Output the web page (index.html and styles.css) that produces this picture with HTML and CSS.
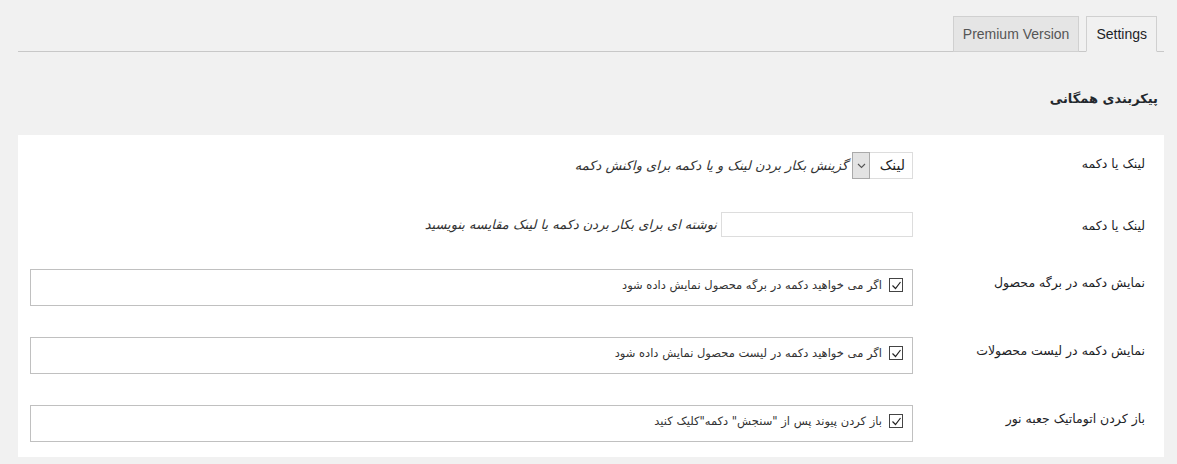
FILE: index.html
```html
<!DOCTYPE html>
<html lang="fa" dir="rtl">
<head>
<meta charset="utf-8">
<title>تنظیمات</title>
<link rel="stylesheet" href="styles.css">
</head>
<body>
<div class="wrap">
  <nav class="tabs">
    <a class="tab tab-active">Settings</a>
    <a class="tab">Premium Version</a>
  </nav>

  <h2 class="section-title">پیکربندی همگانی</h2>

  <div class="panel">
    <div class="row row-first">
      <div class="label">لینک یا دکمه</div>
      <div class="field inline">
        <div class="select">
          <span class="select-value">لینک</span>
          <span class="select-arrow">
            <svg width="9" height="6" viewBox="0 0 9 6"><path d="M1 1l3.5 3.5L8 1" fill="none" stroke="#555" stroke-width="1.1"/></svg>
          </span>
        </div>
        <span class="desc">گزینش بکار بردن لینک و یا دکمه برای واکنش دکمه</span>
      </div>
    </div>

    <div class="row row-second">
      <div class="label">لینک یا دکمه</div>
      <div class="field inline">
        <div class="text-input"></div>
        <span class="desc">نوشته ای برای بکار بردن دکمه یا لینک مقایسه بنویسید</span>
      </div>
    </div>

    <div class="row row-third">
      <div class="label">نمایش دکمه در برگه محصول</div>
      <div class="field">
        <div class="check-box">
          <span class="checkbox"><svg width="11" height="11" viewBox="0 0 11 11"><path d="M1.5 5.5l3 3 5-6.5" fill="none" stroke="#222" stroke-width="1.2"/></svg></span>
          <span class="check-text">اگر می خواهید دکمه در برگه محصول نمایش داده شود</span>
        </div>
      </div>
    </div>

    <div class="row">
      <div class="label">نمایش دکمه در لیست محصولات</div>
      <div class="field">
        <div class="check-box">
          <span class="checkbox"><svg width="11" height="11" viewBox="0 0 11 11"><path d="M1.5 5.5l3 3 5-6.5" fill="none" stroke="#222" stroke-width="1.2"/></svg></span>
          <span class="check-text">اگر می خواهید دکمه در لیست محصول نمایش داده شود</span>
        </div>
      </div>
    </div>

    <div class="row">
      <div class="label">باز کردن اتوماتیک جعبه نور</div>
      <div class="field">
        <div class="check-box">
          <span class="checkbox"><svg width="11" height="11" viewBox="0 0 11 11"><path d="M1.5 5.5l3 3 5-6.5" fill="none" stroke="#222" stroke-width="1.2"/></svg></span>
          <span class="check-text">باز کردن پیوند پس از "سنجش" دکمه"کلیک کنید</span>
        </div>
      </div>
    </div>
  </div>
</div>
</body>
</html>
```

FILE: styles.css
```css
html, body {
  margin: 0;
  padding: 0;
}

body {
  background: #f1f1f1;
  color: #1d2327;
  font-family: "DejaVu Sans", "Noto Sans", sans-serif;
  font-size: 13px;
}

.wrap {
  padding: 0 13px 0 18px;
}

/* tab strip */
.tabs {
  display: flex;
  padding: 16px 7px 0 0;
  border-bottom: 1px solid #c8c8c8;
  height: 35px;
  direction: rtl;
}

.tab {
  display: block;
  box-sizing: border-box;
  height: 36px;
  padding: 0 9px;
  margin-left: 7px;
  border: 1px solid #d0d0d0;
  background: #e5e5e5;
  color: #555;
  font-family: "Liberation Sans", Arial, sans-serif;
  font-size: 14px;
  line-height: 34px;
  direction: ltr;
}

.tab-active {
  background: #f1f1f1;
  border-bottom-color: #f1f1f1;
  color: #1d2327;
}

.section-title {
  margin: 0;
  padding: 37px 6px 0 0;
  height: 46px;
  font-size: 13px;
  font-weight: bold;
  line-height: 20px;
  color: #23282d;
}

/* settings panel */
.panel {
  background: #fff;
  padding: 17px 0 15px 12px;
  display: flex;
  flex-direction: column;
  gap: 31px;
}

.row {
  display: flex;
  align-items: flex-start;
}

.row-second {
  margin-top: 2px;
}

.row-third {
  margin-top: 1px;
}

.label {
  width: 251px;
  flex: none;
  box-sizing: border-box;
  padding: 4px 19px 0 0;
  line-height: 20px;
  font-size: 12.5px;
  color: #1d2327;
}

.row-first .label {
  padding-top: 2px;
}

.field {
  flex: 1;
}

.inline {
  display: flex;
  align-items: center;
  gap: 4px;
}

/* dropdown */
.select {
  box-sizing: border-box;
  width: 61px;
  height: 27px;
  border: 1px solid #ddd;
  display: flex;
  background: #fff;
}

.select-value {
  flex: 1;
  font-size: 14px;
  line-height: 25px;
  padding-right: 7px;
  color: #222;
}

.select-arrow {
  width: 16px;
  background: #e3e3e3;
  border: 1px solid #aaa;
  margin: -1px 0 -1px -1px;
  display: flex;
  align-items: center;
  justify-content: center;
}

.text-input {
  box-sizing: border-box;
  width: 192px;
  height: 25px;
  border: 1px solid #ddd;
  background: #fff;
}

.desc {
  font-style: italic;
  font-size: 13px;
  color: #333;
}

/* checkbox boxes */
.check-box {
  box-sizing: border-box;
  height: 37px;
  border: 1px solid #c0c0c0;
  display: flex;
  align-items: flex-start;
  padding: 7px 9px 0 0;
  gap: 7px;
}

.checkbox {
  box-sizing: border-box;
  width: 14px;
  height: 14px;
  border: 1px solid #444;
  display: flex;
  align-items: center;
  justify-content: center;
  margin-top: 1px;
}

.check-text {
  font-size: 11.5px;
  line-height: 16px;
  color: #333;
}
```
